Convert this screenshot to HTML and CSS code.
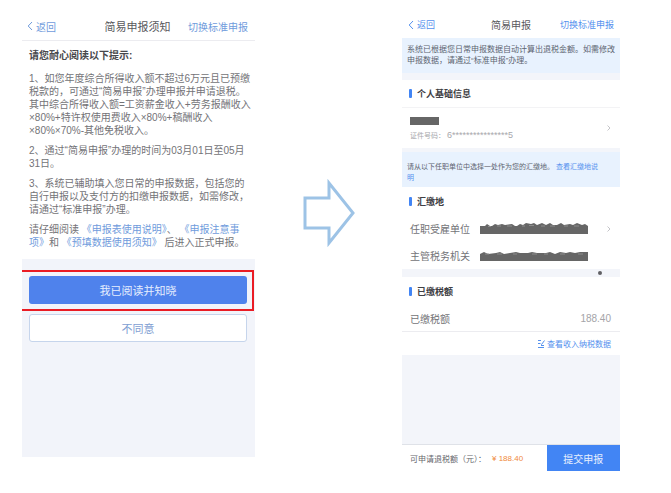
FILE: index.html
```html
<!DOCTYPE html>
<html lang="zh-CN">
<head>
<meta charset="utf-8">
<title>简易申报</title>
<link rel="stylesheet" href="styles.css">
</head>
<body>
<main class="flow">
  <section class="phone notice-phone">
    <header class="bar">
      <a class="back" href="#"><svg class="chev" viewBox="0 0 6 10"><path d="M5 1 1.200 5 5 9"/></svg>返回</a>
      <h1>简易申报须知</h1>
      <a class="switch" href="#">切换标准申报</a>
    </header>
    <article class="terms">
      <h2>请您耐心阅读以下提示:</h2>
      <p>1、如您年度综合所得收入额不超过6万元且已预缴<br>税款的，可通过“简易申报”办理申报并申请退税。<br>其中综合所得收入额=工资薪金收入+劳务报酬收入<br>×80%+特许权使用费收入×80%+稿酬收入<br>×80%×70%-其他免税收入。</p>
      <p>2、通过“简易申报”办理的时间为03月01日至05月<br>31日。</p>
      <p>3、系统已辅助填入您日常的申报数据，包括您的<br>自行申报以及支付方的扣缴申报数据，如需修改，<br>请通过“标准申报”办理。</p>
      <p>请仔细阅读 <a href="#">《申报表使用说明》</a>、 <a href="#">《申报注意事<br>项》</a>和 <a href="#">《预填数据使用须知》</a> 后进入正式申报。</p>
    </article>
    <div class="actions">
      <div class="highlight"><button class="btn agree" type="button">我已阅读并知晓</button></div>
      <div class="plain"><button class="btn refuse" type="button">不同意</button></div>
    </div>
  </section>

  <div class="step">
    <svg class="arrow" viewBox="0 0 52 70"><path d="M2 20H26V5L50 35 26 65V50H2Z"/></svg>
  </div>

  <section class="phone form-phone">
    <header class="bar">
      <a class="back" href="#"><svg class="chev" viewBox="0 0 6 10"><path d="M5 1 1.200 5 5 9"/></svg>返回</a>
      <h1>简易申报</h1>
      <a class="switch" href="#">切换标准申报</a>
    </header>
    <p class="tip">系统已根据您日常申报数据自动计算出退税金额。如需修改<br>申报数据，请通过“标准申报”办理。</p>
    <section class="card first">
      <h2>个人基础信息</h2>
      <div class="person">
        <div>
          <span class="name-mask"></span>
          <span class="id">证件号码： <span class="number">6****************5</span></span>
        </div>
        <svg class="more" viewBox="0 0 4 6"><path d="M.5.5 3 3 .5 5.500"/></svg>
      </div>
    </section>
    <p class="tip spaced">请从以下任职单位中选择一处作为您的汇缴地。 <a href="#">查看汇缴地说<br>明</a></p>
    <section class="card">
      <h2 class="open">汇缴地</h2>
      <div class="row">
        <span class="label">任职受雇单位</span>
        <svg class="mask" viewBox="0 0 108 12"><path d="M0 3H5L7 1 10 3H12L15 1 18 2 22 1 25 2 32 1 35 3H37L40 1 43 2 46 0 51 1 54 0 57 2 62 0 66 2 70 0 73 2H77L81 0 84 2 90 1 93 2 97 0 102 2 105 1 108 3V11H0Z"/><path class="fleck" d="M8 3.500h3M17 3h4M27 3h5M42 3h3M49 2.500h5M61 3h4M70 3h5M84 3h4M94 3h5"/></svg>
        <svg class="more" viewBox="0 0 4 6"><path d="M.5.5 3 3 .5 5.500"/></svg>
      </div>
      <div class="row">
        <span class="label">主管税务机关</span>
        <svg class="mask" viewBox="0 0 108 12"><path d="M0 4 4 2 8 4 16 3 20 2 24 4 30 3 36 2 40 3H48L52 2 57 3H66L70 2 75 4 80 2 86 3 90 2 95 3 100 2H108V11H0Z"/><path class="fleck" d="M5 4h4M17 4h5M33 4h4M52 4h5M64 4h4M80 4h5M98 4h5"/></svg>
      </div>
    </section>
    <div class="divider"><span class="dot"></span></div>
    <section class="card">
      <h2 class="open">已缴税额</h2>
      <div class="row paid"><span class="label">已缴税额</span><span class="value">188.40</span></div>
      <a class="detail" href="#"><svg class="list" viewBox="0 0 8 10"><path d="M1 1.500h3M1 4.500h2M1 8.500h6M3.500 4.500l1 1 3-4M4 6.500h3"/></svg>查看收入纳税数据</a>
    </section>
    <footer class="submit">
      <span class="refund">可申请退税额（元）：</span>
      <span class="amount">¥ 188.40</span>
      <button class="send" type="button">提交申报</button>
    </footer>
  </section>
</main>
</body>
</html>
```
FILE: styles.css
```css
* { box-sizing: border-box; }

body {
  margin: 0;
  background: #fff;
  color: #737377;
  font-family: "Liberation Sans", "Noto Sans CJK SC", sans-serif;
  font-size: 10px;
  white-space: nowrap;
}

h1, h2, p { margin: 0; }
a { color: #6f9bdc; text-decoration: none; }
button { font-family: inherit; padding: 0; }
svg { display: block; fill: none; flex: none; }

.flow {
  display: grid;
  grid-template-columns: 233fr 147fr 218fr;
  min-height: 100vh;
  padding: 14px 51px 22px 22px;
}

.phone { display: flex; flex-direction: column; min-width: 0; }
.notice-phone { background: #f2f4fa; margin-bottom: 14px; }
.form-phone { background: #f3f5fa; }

.bar {
  display: grid;
  grid-template-columns: 1fr auto 1fr;
  align-items: center;
  height: 27px;
  padding: 0 7px 2px 5px;
  background: #fff;
  border-bottom: 1px solid #ececf0;
}
.bar h1 { color: #58585c; font-size: 11px; font-weight: 400; }
.back { display: flex; align-items: center; gap: 3px; }
.switch { justify-self: end; }
.chev { width: 6px; height: 10px; stroke: #6f9bdc; stroke-width: 1; }

.terms {
  display: flex;
  flex-direction: column;
  gap: 7px;
  padding: 8px 0 10px 7px;
  background: #fff;
  line-height: 13px;
}
.terms h2 {
  margin-bottom: 3px;
  color: #48484c;
  font-size: 10px;
  font-weight: 700;
}

.actions { padding-top: 11px; }
.highlight {
  padding: 4px 5px 5px 7px;
  border: solid #ea1c24;
  border-width: 2px 2px 2px 0;
  margin-right: 1px;
}
.plain { padding: 3px 8px 0 7px; }
.btn { display: block; width: 100%; height: 28px; border-radius: 3px; font-size: 11px; }
.agree { border: 0; background: #4f82ec; color: #e6eefe; }
.refuse { border: 1px solid #c6d5ec; background: #fff; color: #7fa0d2; }

.step { display: flex; justify-content: center; padding-top: 164px; }
.arrow { width: 52px; height: 70px; stroke: #9dc3e6; stroke-width: 3; }

.form-phone a { color: #5490ee; }
.form-phone .chev { stroke: #5490ee; }
.form-phone .bar { height: 24px; border-bottom: 0; padding: 0 6px 3px; font-size: 9px; }
.form-phone .bar h1 { font-size: 10px; }

.tip {
  padding: 6px 5px 7px;
  background: #e8f2fe;
  color: #5c6470;
  font-size: 8px;
  line-height: 11px;
}
.spaced { margin-top: 4px; padding: 9px 5px 4px; font-size: 7px; }

.card { background: #fff; }
.first { margin-top: 7px; }
.card h2 {
  display: flex;
  align-items: center;
  gap: 5px;
  height: 28px;
  padding-left: 7px;
  border-bottom: 1px solid #f3f3f5;
  color: #404044;
  font-size: 9px;
  font-weight: 700;
}
.card h2::before { content: ""; width: 3px; height: 9px; background: #4285f4; border-radius: 1px; }
.card .open { border-bottom: 0; }

.person {
  display: flex;
  align-items: center;
  justify-content: space-between;
  height: 40px;
  padding: 0 9px 0 8px;
}
.name-mask { display: block; width: 29px; height: 8px; margin-bottom: 6px; background: #666; }
.id { display: block; color: #a8a8ac; font-size: 7px; line-height: 8px; }
.number { font-size: 9px; }
.more { width: 4px; height: 6px; stroke: #c4c4c8; stroke-width: 1; }

.row { display: flex; align-items: center; height: 27px; padding: 0 9px 0 8px; }
.label { width: 70px; }
.row .more { margin-left: auto; }
.mask { width: 108px; height: 12px; }
.mask path { fill: #666; }
.mask .fleck { stroke: #8c8c8c; stroke-width: 1; }

.divider { display: flex; justify-content: flex-end; align-items: center; height: 8px; padding-right: 18px; }
.dot { width: 4px; height: 4px; border-radius: 50%; background: #606064; }

.paid { border-bottom: 1px solid #ececf0; }
.value { margin-left: auto; color: #a4a4a8; }
.detail {
  display: flex;
  align-items: center;
  justify-content: flex-end;
  gap: 2px;
  height: 23px;
  padding-right: 9px;
  font-size: 8px;
}
.list { width: 8px; height: 10px; stroke: #5490ee; stroke-width: 1; }

.submit {
  display: flex;
  align-items: center;
  height: 27px;
  margin-top: auto;
  padding-left: 8px;
  background: #fff;
  border-top: 1px solid #dfe2e8;
  font-size: 8px;
}
.refund { color: #66666c; }
.amount { margin-left: 6px; color: #f08a3c; }
.send {
  align-self: stretch;
  width: 35%;
  margin-left: auto;
  border: 0;
  background: #4285f4;
  color: #e8f0fe;
  font-size: 10px;
}
```
